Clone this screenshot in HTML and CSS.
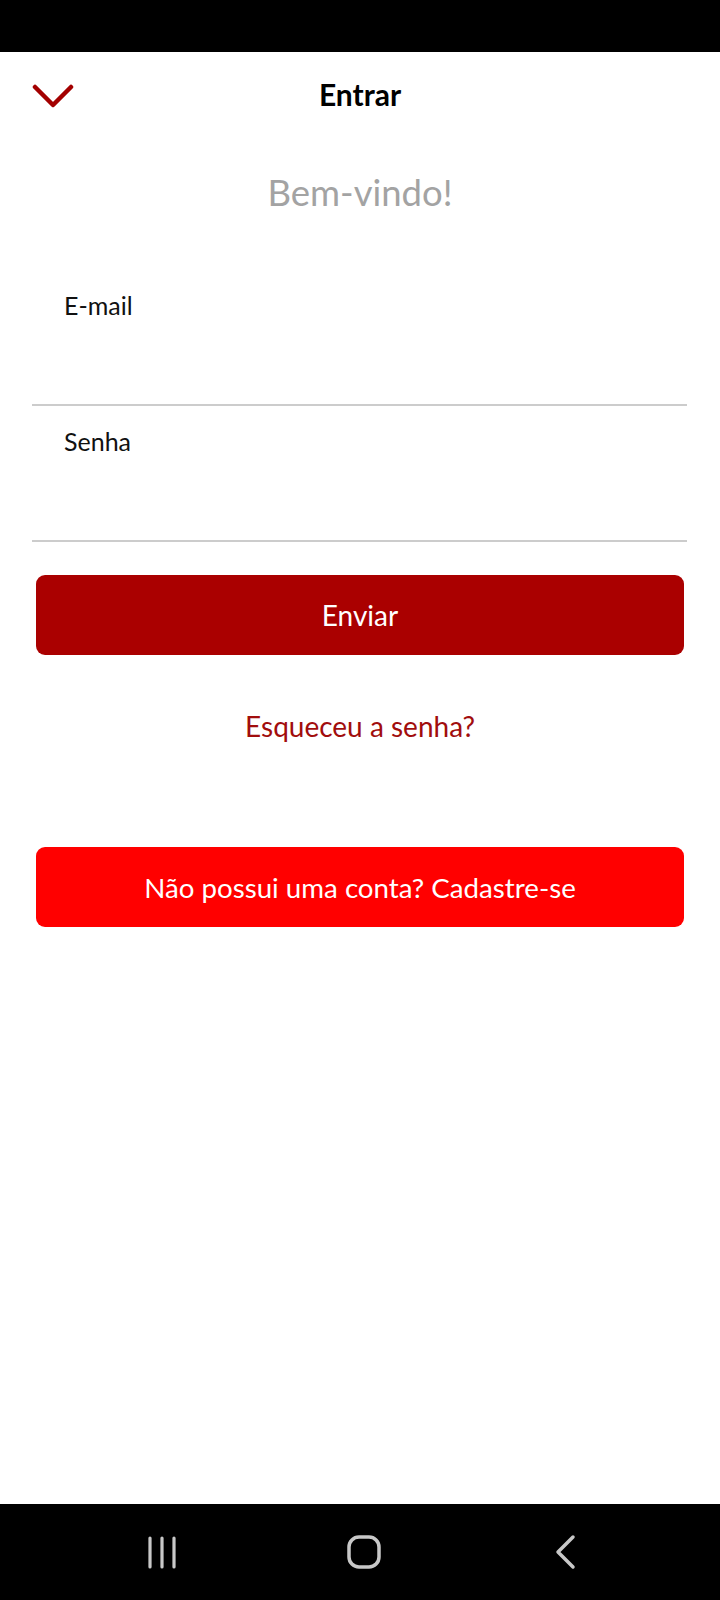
FILE: index.html
```html
<!DOCTYPE html>
<html lang="pt-BR">
<head>
    <meta charset="UTF-8">
    <meta name="viewport" content="width=device-width, initial-scale=1.0">
    <title>Entrar</title>
    <link rel="stylesheet" href="styles.css">
</head>
<body>
    <div class="screen">
        <div class="status-bar"></div>
        <header class="top-bar">
            <button class="close-btn" aria-label="Fechar">
                <svg width="42" height="24" viewBox="0 0 42 24">
                    <polyline points="3,3 21,21 39,3" fill="none" stroke="#a30000" stroke-width="4.5" stroke-linecap="round" stroke-linejoin="round"/>
                </svg>
            </button>
            <h1>Entrar</h1>
            <span></span>
        </header>
        <main class="content">
            <h2 class="welcome">Bem-vindo!</h2>
            <form id="login-form">
                <label class="field">
                    <span class="field-label">E-mail</span>
                    <input type="email" id="email">
                </label>
                <label class="field">
                    <span class="field-label">Senha</span>
                    <input type="password" id="password">
                </label>
                <button type="submit" class="btn btn-primary">Enviar</button>
            </form>
            <a href="#" class="forgot">Esqueceu a senha?</a>
            <button class="btn btn-signup">Não possui uma conta? Cadastre-se</button>
        </main>
        <nav class="nav-bar">
            <svg width="32" height="34" viewBox="0 0 32 34">
                <path d="M4 3v29M16 3v29M28 3v29" stroke="#c8c8c8" stroke-width="3.2" stroke-linecap="round"/>
            </svg>
            <svg width="36" height="36" viewBox="0 0 36 36">
                <rect x="3" y="3" width="30" height="30" rx="10" fill="none" stroke="#c8c8c8" stroke-width="3.5"/>
            </svg>
            <svg width="24" height="36" viewBox="0 0 24 36">
                <polyline points="19,3 4,18 19,33" fill="none" stroke="#c8c8c8" stroke-width="3.5" stroke-linecap="round" stroke-linejoin="round"/>
            </svg>
        </nav>
    </div>
</body>
</html>
```

FILE: styles.css
```css
* {
    box-sizing: border-box;
}

body {
    margin: 0;
    font-family: Lato, "Open Sans", sans-serif;
    background-color: #fff;
}

.screen {
    display: flex;
    flex-direction: column;
    min-height: 1600px;
}

.status-bar {
    height: 52px;
    background-color: #000;
}

.top-bar {
    display: grid;
    grid-template-columns: 1fr auto 1fr;
    align-items: center;
    height: 88px;
    padding: 0 32px;
}

.close-btn {
    justify-self: start;
    display: flex;
    padding: 0;
    border: none;
    background: none;
    cursor: pointer;
}

.top-bar h1 {
    margin: 0 0 4px;
    font-size: 30px;
    font-weight: 700;
    color: #000;
    line-height: 40px;
}

.content {
    flex: 1;
    display: flex;
    flex-direction: column;
}

.welcome {
    margin: 30px 0 56px;
    font-size: 36.5px;
    font-weight: 400;
    line-height: 44px;
    color: #a3a3a3;
    text-align: center;
}

form {
    display: flex;
    flex-direction: column;
}

.field {
    display: flex;
    flex-direction: column;
    margin: 0 33px 0 32px;
    padding-top: 20px;
    border-bottom: 2px solid #cccccc;
}

.field-label {
    padding-left: 32px;
    font-size: 25px;
    line-height: 30px;
    color: #111;
}

.field input {
    height: 84px;
    border: none;
    outline: none;
    background: transparent;
    padding: 0 32px;
    font-size: 24px;
    font-family: inherit;
}

.btn {
    display: block;
    height: 80px;
    margin: 0 36px;
    border: none;
    border-radius: 9px;
    color: #fff;
    font-family: inherit;
    font-size: 28px;
    cursor: pointer;
}

.btn-primary {
    margin-top: 33px;
    background-color: #aa0000;
}

.forgot {
    display: block;
    margin-top: 52px;
    line-height: 38px;
    font-size: 28px;
    color: #a10d0d;
    text-align: center;
    text-decoration: none;
}

.btn-signup {
    margin-top: 102px;
    background-color: #ff0000;
    font-size: 27.7px;
}

.nav-bar {
    display: grid;
    grid-template-columns: repeat(3, 202px);
    justify-content: center;
    justify-items: center;
    align-items: center;
    height: 96px;
    padding-left: 7px;
    background-color: #000;
}
```
